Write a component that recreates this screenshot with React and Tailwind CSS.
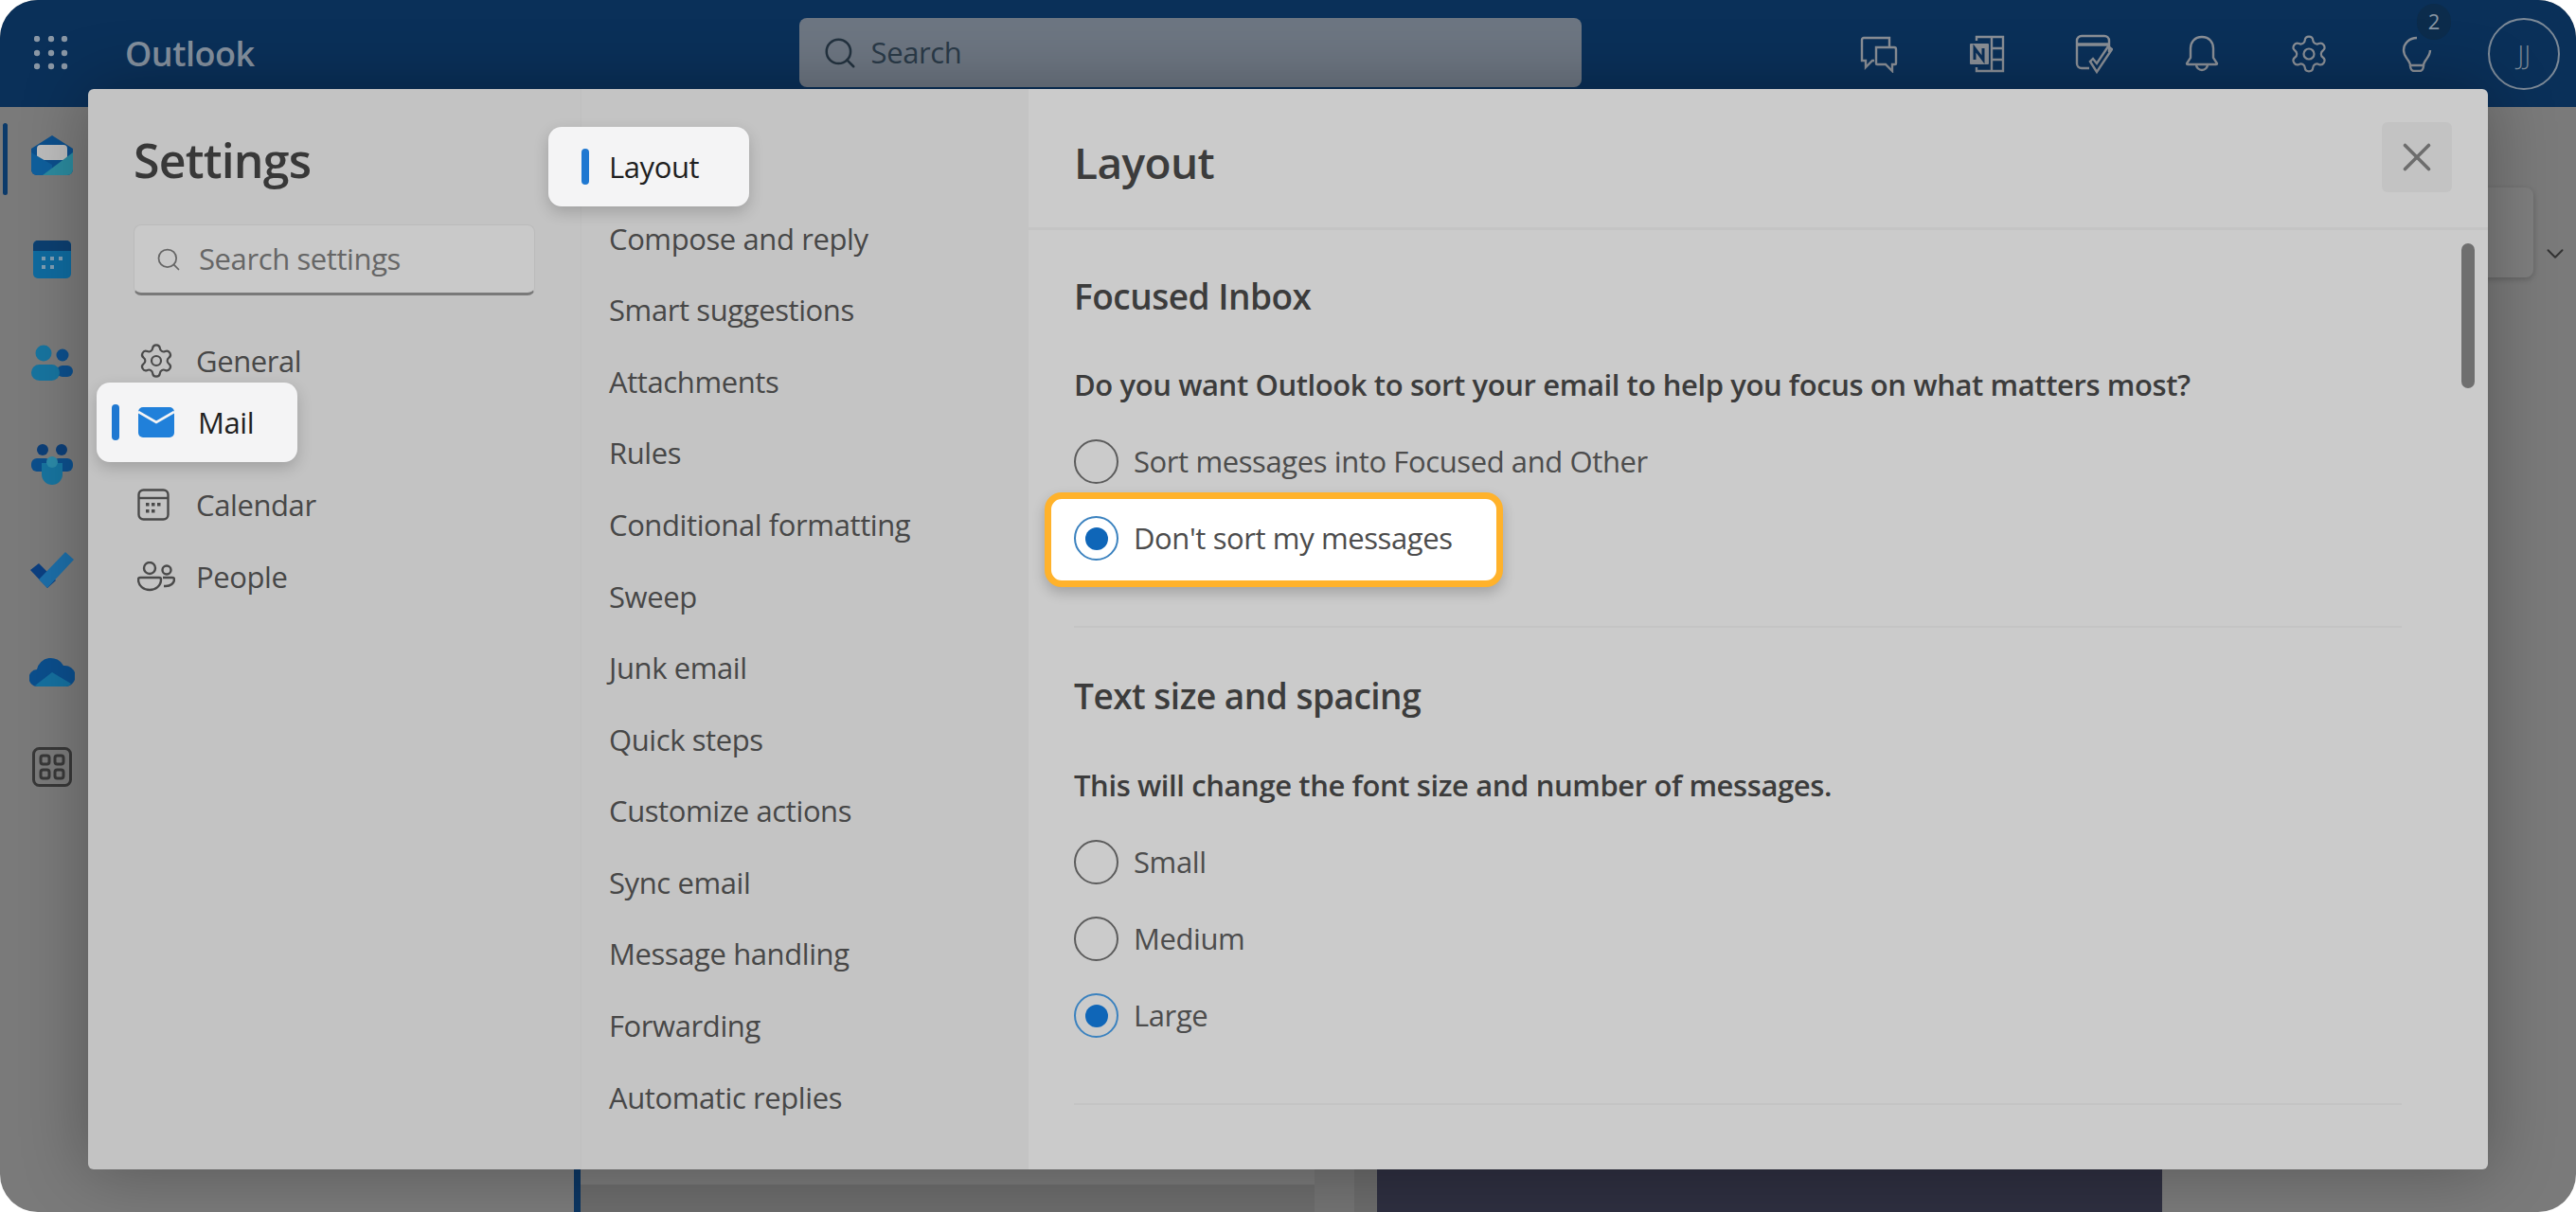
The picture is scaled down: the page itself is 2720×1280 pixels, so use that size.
import { Search, Settings, X, ChevronDown } from 'lucide-react'

const mailOptions = ['Compose and reply', 'Smart suggestions', 'Attachments', 'Rules', 'Conditional formatting', 'Sweep', 'Junk email', 'Quick steps', 'Customize actions', 'Sync email', 'Message handling', 'Forwarding', 'Automatic replies']

function GridDots() {
  const dots = [3, 18, 32]
  return (
    <svg width="36" height="36" viewBox="0 0 36 36" fill="#8a97a5">
      {dots.map((y) => dots.map((x) => <circle key={`${x}-${y}`} cx={x} cy={y} r="3.2" />))}
    </svg>
  )
}

function ChatIcon() {
  return (
    <svg width="42" height="40" viewBox="0 0 42 40" fill="none" stroke="#8a8f96" strokeWidth="2.4">
      <path d="M26 3H5a2 2 0 0 0-2 2v22h4v7l7-7h2" />
      <path d="M18 13h19a2 2 0 0 1 2 2v15a1 1 0 0 1-1 1h-3v7l-7-7H19a1 1 0 0 1-1-1z" />
      <path d="M26 3h6v10" />
    </svg>
  )
}

function NoteIcon() {
  return (
    <svg width="40" height="40" viewBox="0 0 40 40" fill="none" stroke="#8a8f96" strokeWidth="2.4">
      <path d="M9 6V2h28v36H9v-4" />
      <path d="M25 2v36M25 14h12M25 26h12" />
      <rect x="2" y="9" width="20" height="22" rx="1" fill="#8a8f96" stroke="none" />
      <path d="M7 26V14l9 12V14" stroke="#0b3059" strokeWidth="3" />
    </svg>
  )
}

function TodoIcon() {
  return (
    <svg width="40" height="42" viewBox="0 0 40 42" fill="none" stroke="#8a8f96" strokeWidth="2.4">
      <path d="M15 36H7a5 5 0 0 1-5-5V7a5 5 0 0 1 5-5h24a5 5 0 0 1 5 5v12" />
      <path d="M2 11h34" strokeWidth="3.4" />
      <path d="M16 29l7 11 16-24-4-3-12 18-4-5z" />
    </svg>
  )
}

function BellIcon() {
  return (
    <svg width="36" height="40" viewBox="0 0 36 40" fill="none" stroke="#8a8f96" strokeWidth="2.4">
      <path d="M18 2C10 2 6 8 6 14v10l-4 6a1 1 0 0 0 1 1h30a1 1 0 0 0 1-1l-4-6V14c0-6-4-12-12-12z" />
      <path d="M12 31a6 6 0 0 0 12 0" />
    </svg>
  )
}

function BulbIcon() {
  return (
    <svg width="32" height="38" viewBox="0 0 32 38" fill="none" stroke="#8a8f96" strokeWidth="2.4">
      <path d="M16 2C8 2 2 8 2 15c0 5 3 8 5 11 1 2 2 3 2 5h14c0-2 1-3 2-5 2-3 5-6 5-11" />
      <path d="M9 31c0 4 2 6 4 6h6c2 0 4-2 4-6" />
    </svg>
  )
}

function RailMail() {
  return (
    <svg width="44" height="42" viewBox="0 0 44 42">
      <path d="M0 14 22 0l22 14v22a6 6 0 0 1-6 6H6a6 6 0 0 1-6-6z" fill="#0c4f8c" />
      <rect x="6" y="10" width="32" height="16" rx="4" fill="#bcbcbc" />
      <path d="M0 18l22 13v11H6a6 6 0 0 1-6-6z" fill="#0f5f9c" />
      <path d="M44 18v18a6 6 0 0 1-6 6H12z" fill="#2b8a9e" />
    </svg>
  )
}

function RailCalendar() {
  return (
    <svg width="40" height="40" viewBox="0 0 40 40">
      <rect width="40" height="40" rx="5" fill="#0f6a9e" />
      <path d="M0 11V5a5 5 0 0 1 5-5h30a5 5 0 0 1 5 5v6z" fill="#0c3f70" />
      <g fill="#7f9db2">
        <rect x="9" y="17" width="4" height="4" />
        <rect x="18" y="17" width="4" height="4" />
        <rect x="27" y="17" width="4" height="4" />
        <rect x="9" y="26" width="4" height="4" />
        <rect x="18" y="26" width="4" height="4" />
      </g>
    </svg>
  )
}

function RailPeople() {
  return (
    <svg width="44" height="38" viewBox="0 0 44 38">
      <circle cx="13" cy="9" r="8.5" fill="#17749f" />
      <circle cx="33" cy="11" r="6.5" fill="#0c4f8c" />
      <rect x="27" y="22" width="17" height="12" rx="6" fill="#0c4f8c" />
      <rect x="0" y="21" width="30" height="17" rx="8.5" fill="#17749f" />
    </svg>
  )
}

function RailTeams() {
  return (
    <svg width="44" height="44" viewBox="0 0 44 44">
      <circle cx="12" cy="6" r="6" fill="#0c3f78" />
      <circle cx="32" cy="6" r="6" fill="#0c3f78" />
      <rect x="0" y="15" width="21" height="14" rx="6" fill="#0c4f8c" />
      <rect x="23" y="15" width="21" height="14" rx="6" fill="#0c4f8c" />
      <path d="M11 20h22v12a11 11 0 0 1-22 0z" fill="#17749f" />
      <circle cx="22" cy="19" r="6" fill="#2c8aa8" />
    </svg>
  )
}

function RailTodo() {
  return (
    <svg width="46" height="38" viewBox="0 0 46 38">
      <path d="M0 19l9-7 18 18-9 8z" fill="#0c3f80" />
      <path d="M9 29 37 0l9 8-28 30z" fill="#1c6ea8" />
    </svg>
  )
}

function RailCloud() {
  return (
    <svg width="48" height="32" viewBox="0 0 48 32">
      <path d="M9 32a9 9 0 0 1-1-18A15 15 0 0 1 36 10a11 11 0 0 1 3 22z" fill="#0b4e8c" />
      <path d="M9 32a6 6 0 0 1-3-1l18-14 20 12a6 6 0 0 1-5 3z" fill="#15709f" />
    </svg>
  )
}

function RailApps() {
  return (
    <svg width="42" height="42" viewBox="0 0 42 42" fill="none" stroke="#383838" strokeWidth="3">
      <rect x="1.5" y="1.5" width="39" height="39" rx="6" />
      <rect x="9" y="9" width="9" height="9" rx="2.5" />
      <rect x="24" y="9" width="9" height="9" rx="2.5" />
      <rect x="9" y="24" width="9" height="9" rx="2.5" />
      <rect x="24" y="24" width="9" height="9" rx="2.5" />
    </svg>
  )
}

function MailSolid() {
  return (
    <svg width="38" height="32" viewBox="0 0 38 32">
      <rect width="38" height="32" rx="5" fill="#2080da" />
      <path d="M0 5l19 11L38 5" fill="none" stroke="#f4f4f5" strokeWidth="2.6" />
    </svg>
  )
}

function CalendarLine() {
  return (
    <svg width="34" height="34" viewBox="0 0 34 34" fill="none" stroke="#4a4a4a" strokeWidth="2.4">
      <rect x="1.5" y="1.5" width="31" height="31" rx="5" />
      <path d="M1.5 10h31" />
      <g fill="#4a4a4a" stroke="none">
        <rect x="9" y="15" width="3.5" height="3.5" />
        <rect x="15" y="15" width="3.5" height="3.5" />
        <rect x="21" y="15" width="3.5" height="3.5" />
        <rect x="9" y="22" width="3.5" height="3.5" />
        <rect x="15" y="22" width="3.5" height="3.5" />
      </g>
    </svg>
  )
}

function PeopleLine() {
  return (
    <svg width="40" height="32" viewBox="0 0 40 32" fill="none" stroke="#4a4a4a" strokeWidth="2.4">
      <circle cx="13" cy="7" r="6" />
      <circle cx="31" cy="9" r="4.5" />
      <path d="M3 17h20a2 2 0 0 1 2 2c0 7-6 11-12 11S1 26 1 19a2 2 0 0 1 2-2z" />
      <path d="M27 17h10a2 2 0 0 1 2 2c0 4-4 7-9 7h-2" />
    </svg>
  )
}

function NavRow({ icon, label }) {
  return (
    <div className="h-[76px] flex items-center">
      <div className="w-[66px] pl-[4px] flex items-center">{icon}</div>
      <span className="text-[31px] tracking-[-0.4px] text-[#474747]">{label}</span>
    </div>
  )
}

function Radio({ label, checked }) {
  return (
    <div className="relative z-10 h-[81px] flex items-center gap-[16px]">
      {checked ? (
        <div className="w-[47px] h-[47px] rounded-full border-[2.5px] border-[#3b82bf] flex items-center justify-center">
          <div className="w-[24px] h-[24px] rounded-full bg-[#0f66b8]" />
        </div>
      ) : (
        <div className="w-[47px] h-[47px] rounded-full border-[2.5px] border-[#5c5c5c]" />
      )}
      <span className="text-[31px] tracking-[-0.4px] text-[#4c4c4c]">{label}</span>
    </div>
  )
}

export default function App() {
  return (
    <div className="w-[2720px] h-[1280px] bg-white font-['Open_Sans',sans-serif]">
      <div className="relative w-full h-full rounded-[40px] overflow-hidden bg-[#7a7a7a] flex flex-col">
        {/* Top bar */}
        <header className="h-[113px] shrink-0 bg-[#0a3059] flex items-center">
          <div className="ml-[36px] pb-[1px]">
            <GridDots />
          </div>
          <span className="ml-[60px] text-[36px] font-semibold tracking-[-0.5px] text-[#84909e]">Outlook</span>
          <div className="ml-[575px] w-[826px] h-[73px] -mt-[2px] bg-[#6d7682] rounded-[8px] flex items-center pl-[24px] gap-[14px]">
            <Search size={38} strokeWidth={1.6} className="text-[#23323f]" />
            <span className="text-[31px] tracking-[-0.4px] text-[#2a3a48]">Search</span>
          </div>
          <div className="ml-auto -mr-[2px] flex items-center">
            <div className="w-[113.5px] flex justify-center"><ChatIcon /></div>
            <div className="w-[113.5px] flex justify-center"><NoteIcon /></div>
            <div className="w-[113.5px] flex justify-center"><TodoIcon /></div>
            <div className="w-[113.5px] flex justify-center"><BellIcon /></div>
            <div className="w-[113.5px] flex justify-center"><Settings size={44} strokeWidth={1.2} className="text-[#8a8f96]" /></div>
            <div className="relative w-[113.5px] flex justify-center">
              <BulbIcon />
              <div className="absolute left-[57px] -top-[34px] w-[36px] h-[38px] rounded-full bg-[#0c2c4c] flex items-center justify-center text-[22px] text-[#8a97a5]">2</div>
            </div>
            <div className="w-[113.5px] flex justify-center">
              <div className="w-[76px] h-[76px] rounded-full border-2 border-[#7c8997] flex items-center justify-center text-[28px] font-light text-[#7c8997]">JJ</div>
            </div>
          </div>
        </header>

        {/* App behind the dialog */}
        <div className="flex-1 flex min-h-0">
          <aside className="w-[93px] shrink-0 relative flex flex-col items-center pl-[17px] pt-[30px]">
            <div className="absolute left-[3px] top-[17px] w-[5px] h-[76px] rounded-full bg-[#0b3a6a]" />
            <div className="h-[111px]"><RailMail /></div>
            <div className="h-[110px]"><RailCalendar /></div>
            <div className="h-[105px]"><RailPeople /></div>
            <div className="h-[114px]"><RailTeams /></div>
            <div className="h-[110px]"><RailTodo /></div>
            <div className="h-[96px]"><RailCloud /></div>
            <RailApps />
          </aside>
          <div className="w-[513px] shrink-0" />
          <div className="w-[7px] shrink-0 bg-[#0c3662]" />
          <div className="w-[775px] shrink-0 flex flex-col justify-end">
            <div className="h-[29px] border-t-2 border-[#6d6d6d] bg-[#6c6c6c]" />
          </div>
          <div className="w-[42px] shrink-0 bg-[#737373]" />
          <div className="w-[24px] shrink-0 bg-[#6b6b6b]" />
          <div className="w-[829px] shrink-0 bg-[#2e2f40]" />
          <div className="flex-1 flex justify-end items-start">
            <div className="mt-[85px] w-[200px] h-[95px] rounded-[8px] bg-[#7e7e7e] shadow-[0_2px_6px_rgba(0,0,0,0.2)]" />
            <div className="w-[45px] mt-[140px] flex justify-center">
              <ChevronDown size={30} strokeWidth={1.6} className="text-[#333333]" />
            </div>
          </div>
        </div>

        {/* Settings dialog */}
        <div className="absolute left-[93px] top-[94px] w-[2534px] h-[1141px] rounded-[6px] flex overflow-hidden shadow-[0_0_70px_rgba(0,0,0,0.3)]">
          <div className="w-[520px] shrink-0 bg-[#c3c3c3] pl-[48px] pt-[45px]">
            <h1 className="h-[60px] flex items-center text-[50px] font-semibold tracking-[-0.8px] text-[#383838]">Settings</h1>
            <div className="mt-[38px] w-[424px] h-[75px] rounded-[8px] bg-[#c9c9c9] border border-[#bbbbbb] border-b-[3px] border-b-[#797979] flex items-center pl-[22px] gap-[18px]">
              <Search size={28} strokeWidth={1.5} className="text-[#666666]" />
              <span className="text-[31px] tracking-[-0.4px] text-[#666666]">Search settings</span>
            </div>
            <div className="mt-[31px]">
              <NavRow icon={<Settings size={40} strokeWidth={1.3} className="text-[#4a4a4a]" />} label="General" />
              <div className="relative h-[76px]">
                <div className="absolute -left-[39px] -top-[15px] w-[212px] h-[84px] rounded-[14px] bg-[#f4f4f5] shadow-[0_6px_16px_rgba(0,0,0,0.18)] flex items-center pl-[16px]">
                  <div className="w-[8px] h-[38px] rounded-full bg-[#1f78d1]" />
                  <div className="ml-[20px]"><MailSolid /></div>
                  <span className="ml-[25px] text-[31px] font-medium tracking-[-0.4px] text-[#1f1f1f]">Mail</span>
                </div>
              </div>
              <NavRow icon={<CalendarLine />} label="Calendar" />
              <NavRow icon={<PeopleLine />} label="People" />
            </div>
          </div>

          <div className="w-[473px] shrink-0 bg-[#c4c4c4] pt-[44px] border-l border-[#bfbfbf]">
            <div className="relative h-[76px]">
              <div className="absolute -left-[35px] top-[-4px] w-[212px] h-[84px] rounded-[14px] bg-[#f4f4f5] shadow-[0_6px_16px_rgba(0,0,0,0.18)] flex items-center pl-[35px]">
                <div className="w-[8px] h-[38px] rounded-full bg-[#1f78d1]" />
                <span className="ml-[21px] text-[31px] font-medium tracking-[-0.4px] text-[#1f1f1f]">Layout</span>
              </div>
            </div>
            {mailOptions.map((label) => (
              <div key={label} className="h-[75.6px] flex items-center pl-[29px] text-[31px] tracking-[-0.4px] text-[#474747]">
                {label}
              </div>
            ))}
          </div>

          <div className="relative flex-1 bg-[#cbcbcb] flex flex-col min-w-0">
            <div className="h-[149px] shrink-0 border-b-[3px] border-[#c4c4c4] flex items-center justify-between pl-[48px] pr-[38px]">
              <h2 className="pt-[8px] text-[46px] font-semibold tracking-[-0.6px] text-[#3c3c3c]">Layout</h2>
              <div className="-mt-[2px] w-[74px] h-[74px] rounded-[6px] bg-[#c3c3c3] flex items-center justify-center">
                <X size={50} strokeWidth={1.7} className="text-[#6d6d6d]" />
              </div>
            </div>
            <div className="absolute right-[14px] top-[163px] w-[14px] h-[153px] rounded-full bg-[#6f6f6f]" />
            <div className="pl-[48px] pr-[91px] pt-[45px]">
              <h3 className="h-[50px] flex items-center text-[37px] font-semibold tracking-[-0.5px] text-[#3c3c3c]">Focused Inbox</h3>
              <p className="mt-[45px] h-[46px] flex items-center text-[31px] font-semibold tracking-[-0.4px] text-[#3c3c3c]">Do you want Outlook to sort your email to help you focus on what matters most?</p>
              <div className="mt-[18px]">
                <Radio label="Sort messages into Focused and Other" />
                <div className="relative">
                  <div className="absolute -left-[31px] -top-[8px] w-[484px] h-[100px] rounded-[18px] border-[7px] border-[#ffb22b] bg-white shadow-[0_6px_14px_rgba(0,0,0,0.2)]" />
                  <Radio label="Don't sort my messages" checked />
                </div>
              </div>
              <div className="mt-[52px] h-[2px] bg-[#c4c4c4]" />
              <h3 className="mt-[47px] h-[50px] flex items-center text-[37px] font-semibold tracking-[-0.5px] text-[#3c3c3c]">Text size and spacing</h3>
              <p className="mt-[46px] h-[46px] flex items-center text-[31px] font-semibold tracking-[-0.4px] text-[#3c3c3c]">This will change the font size and number of messages.</p>
              <div className="mt-[18px]">
                <Radio label="Small" />
                <Radio label="Medium" />
                <Radio label="Large" checked />
              </div>
              <div className="mt-[52px] h-[2px] bg-[#c4c4c4]" />
            </div>
          </div>
        </div>
      </div>
    </div>
  )
}
